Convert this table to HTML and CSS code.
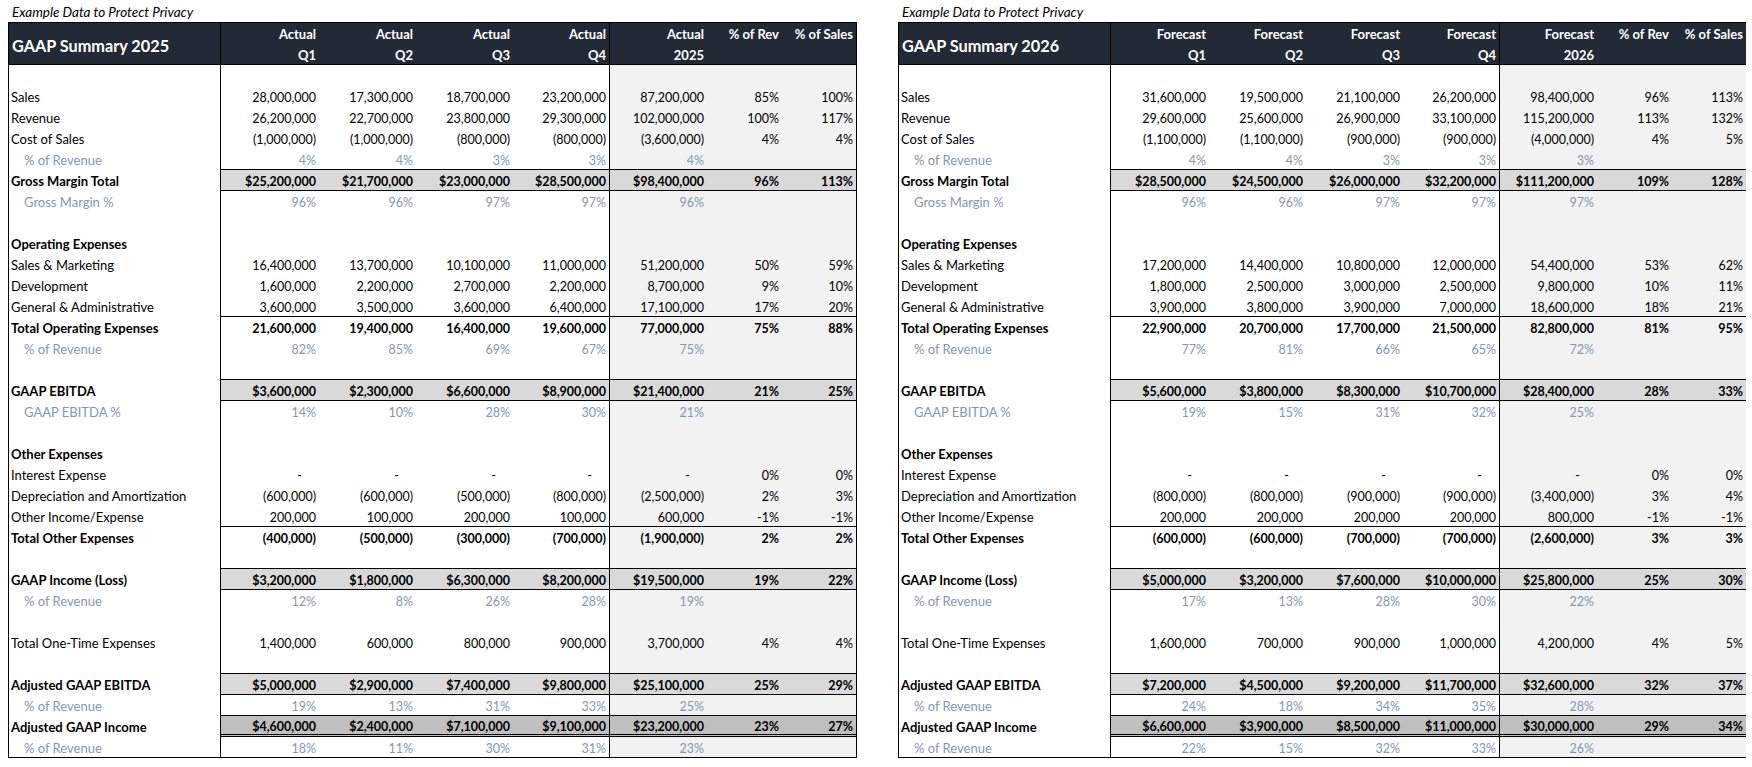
FILE: index.html
```html
<!DOCTYPE html>
<html lang="en">
<head>
<meta charset="utf-8">
<title>GAAP Summary</title>
<link rel="stylesheet" href="styles.css">
</head>
<body>
<div class="page">

<section class="sheet">
  <div class="caption">Example Data to Protect Privacy</div>
  <div class="table">
    <div class="head">
      <span class="title">GAAP Summary 2025</span>
      <span>Actual<br>Q1</span><span>Actual<br>Q2</span><span>Actual<br>Q3</span><span>Actual<br>Q4</span>
      <span>Actual<br>2025</span><span>% of Rev</span><span>% of Sales</span>
    </div>
    <div class="row first"><span></span><span></span><span></span><span></span><span></span><span></span><span></span><span></span></div>
    <div class="row"><span>Sales</span><span>28,000,000</span><span>17,300,000</span><span>18,700,000</span><span>23,200,000</span><span>87,200,000</span><span>85%</span><span>100%</span></div>
    <div class="row"><span>Revenue</span><span>26,200,000</span><span>22,700,000</span><span>23,800,000</span><span>29,300,000</span><span>102,000,000</span><span>100%</span><span>117%</span></div>
    <div class="row"><span>Cost of Sales</span><span>(1,000,000)</span><span>(1,000,000)</span><span>(800,000)</span><span>(800,000)</span><span>(3,600,000)</span><span>4%</span><span>4%</span></div>
    <div class="row sub"><span>% of Revenue</span><span>4%</span><span>4%</span><span>3%</span><span>3%</span><span>4%</span><span></span><span></span></div>
    <div class="row hl"><span>Gross Margin Total</span><span>$25,200,000</span><span>$21,700,000</span><span>$23,000,000</span><span>$28,500,000</span><span>$98,400,000</span><span>96%</span><span>113%</span></div>
    <div class="row sub rule"><span>Gross Margin %</span><span>96%</span><span>96%</span><span>97%</span><span>97%</span><span>96%</span><span></span><span></span></div>
    <div class="row"><span></span><span></span><span></span><span></span><span></span><span></span><span></span><span></span></div>
    <div class="row tot"><span>Operating Expenses</span><span></span><span></span><span></span><span></span><span></span><span></span><span></span></div>
    <div class="row"><span>Sales &amp; Marketing</span><span>16,400,000</span><span>13,700,000</span><span>10,100,000</span><span>11,000,000</span><span>51,200,000</span><span>50%</span><span>59%</span></div>
    <div class="row"><span>Development</span><span>1,600,000</span><span>2,200,000</span><span>2,700,000</span><span>2,200,000</span><span>8,700,000</span><span>9%</span><span>10%</span></div>
    <div class="row"><span>General &amp; Administrative</span><span>3,600,000</span><span>3,500,000</span><span>3,600,000</span><span>6,400,000</span><span>17,100,000</span><span>17%</span><span>20%</span></div>
    <div class="row tot rule"><span>Total Operating Expenses</span><span>21,600,000</span><span>19,400,000</span><span>16,400,000</span><span>19,600,000</span><span>77,000,000</span><span>75%</span><span>88%</span></div>
    <div class="row sub"><span>% of Revenue</span><span>82%</span><span>85%</span><span>69%</span><span>67%</span><span>75%</span><span></span><span></span></div>
    <div class="row"><span></span><span></span><span></span><span></span><span></span><span></span><span></span><span></span></div>
    <div class="row hl"><span>GAAP EBITDA</span><span>$3,600,000</span><span>$2,300,000</span><span>$6,600,000</span><span>$8,900,000</span><span>$21,400,000</span><span>21%</span><span>25%</span></div>
    <div class="row sub rule"><span>GAAP EBITDA %</span><span>14%</span><span>10%</span><span>28%</span><span>30%</span><span>21%</span><span></span><span></span></div>
    <div class="row"><span></span><span></span><span></span><span></span><span></span><span></span><span></span><span></span></div>
    <div class="row tot"><span>Other Expenses</span><span></span><span></span><span></span><span></span><span></span><span></span><span></span></div>
    <div class="row"><span>Interest Expense</span><span class="dash">-</span><span class="dash">-</span><span class="dash">-</span><span class="dash">-</span><span class="dash">-</span><span>0%</span><span>0%</span></div>
    <div class="row"><span>Depreciation and Amortization</span><span>(600,000)</span><span>(600,000)</span><span>(500,000)</span><span>(800,000)</span><span>(2,500,000)</span><span>2%</span><span>3%</span></div>
    <div class="row"><span>Other Income/Expense</span><span>200,000</span><span>100,000</span><span>200,000</span><span>100,000</span><span>600,000</span><span>-1%</span><span>-1%</span></div>
    <div class="row tot rule"><span>Total Other Expenses</span><span>(400,000)</span><span>(500,000)</span><span>(300,000)</span><span>(700,000)</span><span>(1,900,000)</span><span>2%</span><span>2%</span></div>
    <div class="row"><span></span><span></span><span></span><span></span><span></span><span></span><span></span><span></span></div>
    <div class="row hl"><span>GAAP Income (Loss)</span><span>$3,200,000</span><span>$1,800,000</span><span>$6,300,000</span><span>$8,200,000</span><span>$19,500,000</span><span>19%</span><span>22%</span></div>
    <div class="row sub rule"><span>% of Revenue</span><span>12%</span><span>8%</span><span>26%</span><span>28%</span><span>19%</span><span></span><span></span></div>
    <div class="row"><span></span><span></span><span></span><span></span><span></span><span></span><span></span><span></span></div>
    <div class="row"><span>Total One-Time Expenses</span><span>1,400,000</span><span>600,000</span><span>800,000</span><span>900,000</span><span>3,700,000</span><span>4%</span><span>4%</span></div>
    <div class="row"><span></span><span></span><span></span><span></span><span></span><span></span><span></span><span></span></div>
    <div class="row hl"><span>Adjusted GAAP EBITDA</span><span>$5,000,000</span><span>$2,900,000</span><span>$7,400,000</span><span>$9,800,000</span><span>$25,100,000</span><span>25%</span><span>29%</span></div>
    <div class="row sub rule"><span>% of Revenue</span><span>19%</span><span>13%</span><span>31%</span><span>33%</span><span>25%</span><span></span><span></span></div>
    <div class="row hl2"><span>Adjusted GAAP Income</span><span>$4,600,000</span><span>$2,400,000</span><span>$7,100,000</span><span>$9,100,000</span><span>$23,200,000</span><span>23%</span><span>27%</span></div>
    <div class="row sub last"><span>% of Revenue</span><span>18%</span><span>11%</span><span>30%</span><span>31%</span><span>23%</span><span></span><span></span></div>
  </div>
</section>

<section class="sheet clip">
  <div class="caption">Example Data to Protect Privacy</div>
  <div class="table">
    <div class="head">
      <span class="title">GAAP Summary 2026</span>
      <span>Forecast<br>Q1</span><span>Forecast<br>Q2</span><span>Forecast<br>Q3</span><span>Forecast<br>Q4</span>
      <span>Forecast<br>2026</span><span>% of Rev</span><span>% of Sales</span>
    </div>
    <div class="row first"><span></span><span></span><span></span><span></span><span></span><span></span><span></span><span></span></div>
    <div class="row"><span>Sales</span><span>31,600,000</span><span>19,500,000</span><span>21,100,000</span><span>26,200,000</span><span>98,400,000</span><span>96%</span><span>113%</span></div>
    <div class="row"><span>Revenue</span><span>29,600,000</span><span>25,600,000</span><span>26,900,000</span><span>33,100,000</span><span>115,200,000</span><span>113%</span><span>132%</span></div>
    <div class="row"><span>Cost of Sales</span><span>(1,100,000)</span><span>(1,100,000)</span><span>(900,000)</span><span>(900,000)</span><span>(4,000,000)</span><span>4%</span><span>5%</span></div>
    <div class="row sub"><span>% of Revenue</span><span>4%</span><span>4%</span><span>3%</span><span>3%</span><span>3%</span><span></span><span></span></div>
    <div class="row hl"><span>Gross Margin Total</span><span>$28,500,000</span><span>$24,500,000</span><span>$26,000,000</span><span>$32,200,000</span><span>$111,200,000</span><span>109%</span><span>128%</span></div>
    <div class="row sub rule"><span>Gross Margin %</span><span>96%</span><span>96%</span><span>97%</span><span>97%</span><span>97%</span><span></span><span></span></div>
    <div class="row"><span></span><span></span><span></span><span></span><span></span><span></span><span></span><span></span></div>
    <div class="row tot"><span>Operating Expenses</span><span></span><span></span><span></span><span></span><span></span><span></span><span></span></div>
    <div class="row"><span>Sales &amp; Marketing</span><span>17,200,000</span><span>14,400,000</span><span>10,800,000</span><span>12,000,000</span><span>54,400,000</span><span>53%</span><span>62%</span></div>
    <div class="row"><span>Development</span><span>1,800,000</span><span>2,500,000</span><span>3,000,000</span><span>2,500,000</span><span>9,800,000</span><span>10%</span><span>11%</span></div>
    <div class="row"><span>General &amp; Administrative</span><span>3,900,000</span><span>3,800,000</span><span>3,900,000</span><span>7,000,000</span><span>18,600,000</span><span>18%</span><span>21%</span></div>
    <div class="row tot rule"><span>Total Operating Expenses</span><span>22,900,000</span><span>20,700,000</span><span>17,700,000</span><span>21,500,000</span><span>82,800,000</span><span>81%</span><span>95%</span></div>
    <div class="row sub"><span>% of Revenue</span><span>77%</span><span>81%</span><span>66%</span><span>65%</span><span>72%</span><span></span><span></span></div>
    <div class="row"><span></span><span></span><span></span><span></span><span></span><span></span><span></span><span></span></div>
    <div class="row hl"><span>GAAP EBITDA</span><span>$5,600,000</span><span>$3,800,000</span><span>$8,300,000</span><span>$10,700,000</span><span>$28,400,000</span><span>28%</span><span>33%</span></div>
    <div class="row sub rule"><span>GAAP EBITDA %</span><span>19%</span><span>15%</span><span>31%</span><span>32%</span><span>25%</span><span></span><span></span></div>
    <div class="row"><span></span><span></span><span></span><span></span><span></span><span></span><span></span><span></span></div>
    <div class="row tot"><span>Other Expenses</span><span></span><span></span><span></span><span></span><span></span><span></span><span></span></div>
    <div class="row"><span>Interest Expense</span><span class="dash">-</span><span class="dash">-</span><span class="dash">-</span><span class="dash">-</span><span class="dash">-</span><span>0%</span><span>0%</span></div>
    <div class="row"><span>Depreciation and Amortization</span><span>(800,000)</span><span>(800,000)</span><span>(900,000)</span><span>(900,000)</span><span>(3,400,000)</span><span>3%</span><span>4%</span></div>
    <div class="row"><span>Other Income/Expense</span><span>200,000</span><span>200,000</span><span>200,000</span><span>200,000</span><span>800,000</span><span>-1%</span><span>-1%</span></div>
    <div class="row tot rule"><span>Total Other Expenses</span><span>(600,000)</span><span>(600,000)</span><span>(700,000)</span><span>(700,000)</span><span>(2,600,000)</span><span>3%</span><span>3%</span></div>
    <div class="row"><span></span><span></span><span></span><span></span><span></span><span></span><span></span><span></span></div>
    <div class="row hl"><span>GAAP Income (Loss)</span><span>$5,000,000</span><span>$3,200,000</span><span>$7,600,000</span><span>$10,000,000</span><span>$25,800,000</span><span>25%</span><span>30%</span></div>
    <div class="row sub rule"><span>% of Revenue</span><span>17%</span><span>13%</span><span>28%</span><span>30%</span><span>22%</span><span></span><span></span></div>
    <div class="row"><span></span><span></span><span></span><span></span><span></span><span></span><span></span><span></span></div>
    <div class="row"><span>Total One-Time Expenses</span><span>1,600,000</span><span>700,000</span><span>900,000</span><span>1,000,000</span><span>4,200,000</span><span>4%</span><span>5%</span></div>
    <div class="row"><span></span><span></span><span></span><span></span><span></span><span></span><span></span><span></span></div>
    <div class="row hl"><span>Adjusted GAAP EBITDA</span><span>$7,200,000</span><span>$4,500,000</span><span>$9,200,000</span><span>$11,700,000</span><span>$32,600,000</span><span>32%</span><span>37%</span></div>
    <div class="row sub rule"><span>% of Revenue</span><span>24%</span><span>18%</span><span>34%</span><span>35%</span><span>28%</span><span></span><span></span></div>
    <div class="row hl2"><span>Adjusted GAAP Income</span><span>$6,600,000</span><span>$3,900,000</span><span>$8,500,000</span><span>$11,000,000</span><span>$30,000,000</span><span>29%</span><span>34%</span></div>
    <div class="row sub last"><span>% of Revenue</span><span>22%</span><span>15%</span><span>32%</span><span>33%</span><span>26%</span><span></span><span></span></div>
  </div>
</section>

</div>
</body>
</html>
```

FILE: styles.css
```css
* { box-sizing: border-box; }

body {
  margin: 0;
  padding: 0 0 0 8px;
  background: #ffffff;
  color: #000000;
  font-family: Lato, "Open Sans", sans-serif;
  font-size: 12.5px;
}

.page {
  display: flex;
  gap: 41px;
}

.sheet {
  flex: none;
  width: 849px;
}

.sheet.clip {
  width: 848px;
  overflow: hidden;
}

.caption {
  height: 22px;
  padding: 4px 0 0 4px;
  line-height: 17px;
  font-size: 13.5px;
  font-style: italic;
  white-space: nowrap;
}

.table {
  --cols: 212px 98px 97px 97px 97px 97px 75px 74px;
  width: 849px;
  border: 1px solid #000000;
}

.head {
  display: grid;
  grid-template-columns: var(--cols);
  height: 42px;
  background: #222b35;
  color: #ffffff;
  font-size: 13px;
  font-weight: 700;
  border-bottom: 1px solid #000000;
}

.head > span {
  padding: 1px 3px 0 0;
  line-height: 21px;
  text-align: right;
  white-space: nowrap;
}

.head > span:nth-child(5) {
  border-right: 1px solid #000000;
}

.head .title {
  display: flex;
  align-items: center;
  padding: 1px 0 0 3px;
  font-size: 16.25px;
  text-align: left;
  border-right: 1px solid #000000;
}

.row {
  display: grid;
  grid-template-columns: var(--cols);
  height: 21px;
}

.row > span {
  padding: 4px 3px 0 0;
  line-height: 17px;
  text-align: right;
  white-space: nowrap;
}

.row > span:first-child {
  padding-left: 2px;
  font-size: 13px;
  text-align: left;
  border-right: 1px solid #000000;
}

.row > span:nth-child(5) {
  border-right: 1px solid #000000;
}

.row > span:nth-child(n+6) {
  background: #f2f2f2;
}

.row > span.dash {
  padding-right: 17px;
}

.row.first {
  height: 20px;
}

.row.sub {
  color: #8497b0;
}

.row.sub > span:first-child {
  padding-left: 15px;
}

.row.tot,
.row.hl,
.row.hl2 {
  font-weight: 700;
}

.row.rule > span:not(:first-child),
.row.hl > span:not(:first-child) {
  border-top: 1px solid #000000;
  padding-top: 3px;
}

.row.hl > span:not(:first-child) {
  background: #d9d9d9;
}

.row.hl2 {
  height: 22px;
}

.row.hl2 > span:not(:first-child) {
  background: #bfbfbf;
  border-top: 1px solid #000000;
  border-bottom: 3px double #000000;
  padding-top: 4px;
  line-height: 14px;
}

.row.last {
  height: 20px;
}

.row.last > span {
  padding-top: 3px;
}
```
